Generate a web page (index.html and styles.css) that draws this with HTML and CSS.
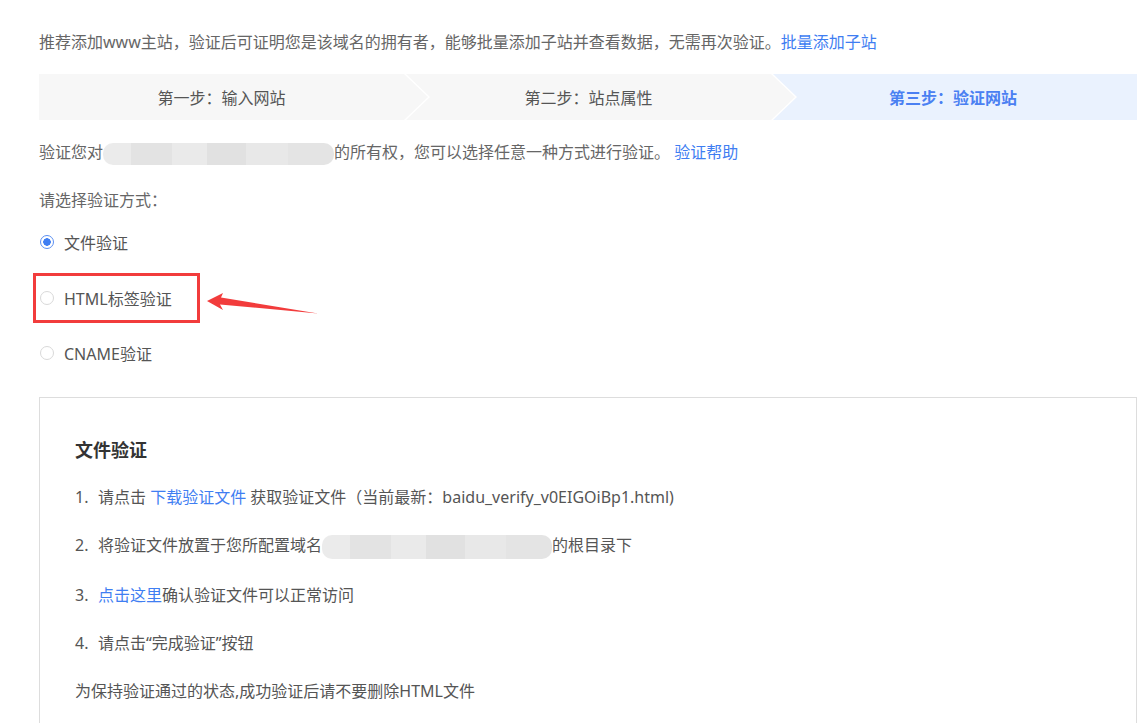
FILE: index.html
```html
<!DOCTYPE html>
<html lang="zh-CN">
<head>
    <meta charset="UTF-8">
    <title>验证网站</title>
    <link rel="stylesheet" href="styles.css">
</head>
<body>
    <div class="page">
        <p class="intro">推荐添加www主站，验证后可证明您是该域名的拥有者，能够批量添加子站并查看数据，无需再次验证。<a class="link" href="#">批量添加子站</a></p>

        <div class="steps">
            <div class="step step-first">第一步：输入网站</div>
            <div class="step step-mid">第二步：站点属性</div>
            <div class="step step-last">第三步：验证网站</div>
        </div>

        <p class="line">验证您对<span class="blur"></span>的所有权，您可以选择任意一种方式进行验证。 <a class="link" href="#">验证帮助</a></p>
        <p class="line label">请选择验证方式：</p>

        <div class="methods">
            <div class="method"><span class="radio checked"></span>文件验证</div>
            <div class="method marked">
                <span class="radio"></span>HTML标签验证
                <div class="mark-box"></div>
                <svg class="mark-arrow" width="120" height="30" viewBox="200 290 120 30">
                    <polygon points="207,302 223,294 221,298.5 318,314.5 220,305.5 223,311" fill="#f23c3c"/>
                </svg>
            </div>
            <div class="method"><span class="radio"></span>CNAME验证</div>
        </div>

        <div class="panel">
            <h3 class="panel-title">文件验证</h3>
            <ol class="tips">
                <li><span class="num">1.</span>请点击 <a class="link" href="#">下载验证文件</a> 获取验证文件（当前最新：baidu_verify_v0EIGOiBp1.html)</li>
                <li><span class="num">2.</span>将验证文件放置于您所配置域名<span class="blur blur-sm"></span>的根目录下</li>
                <li><span class="num">3.</span><a class="link" href="#">点击这里</a>确认验证文件可以正常访问</li>
                <li><span class="num">4.</span>请点击“完成验证”按钮</li>
                <li>为保持验证通过的状态,成功验证后请不要删除HTML文件</li>
            </ol>
        </div>
    </div>
</body>
</html>
```

FILE: styles.css
```css
body {
    margin: 0;
    background-color: #fff;
    font-family: "Noto Sans", "Noto Sans CJK SC", sans-serif;
    font-size: 16px;
    color: #555;
}
.page {
    padding: 31px 11px 0 39px;
    overflow: hidden;
}
p {
    margin: 0;
}
.link {
    color: #3f7ef2;
    text-decoration: none;
}
.intro {
    line-height: 22px;
    color: #666;
}

/* step bar */
.steps {
    display: flex;
    height: 46px;
    margin-top: 21px;
}
.step {
    display: flex;
    align-items: center;
    justify-content: center;
    background-color: #f7f7f7;
    color: #555;
}
.step-first,
.step-mid {
    flex: 0 0 389px;
    margin-right: -22px;
    padding-right: 24px;
    box-sizing: border-box;
}
.step-first {
    clip-path: polygon(0 0, calc(100% - 24px) 0, 100% 50%, calc(100% - 24px) 100%, 0 100%);
}
.step-mid {
    clip-path: polygon(0 0, calc(100% - 24px) 0, 100% 50%, calc(100% - 24px) 100%, 0 100%, 24px 50%);
}
.step-last {
    flex: 1;
    padding-right: 4px;
    background-color: #eaf2fe;
    color: #4a80f2;
    font-weight: bold;
    clip-path: polygon(0 0, 100% 0, 100% 100%, 0 100%, 24px 50%);
}

.line {
    margin-top: 21px;
    line-height: 22px;
    color: #666;
}
.label {
    margin-top: 24px;
}
.blur {
    display: inline-block;
    width: 231px;
    height: 22px;
    vertical-align: middle;
    border-radius: 10px;
    background: linear-gradient(to right, #ebebeb 0 12%, #e3e3e3 12% 30%, #eaeaea 30% 45%, #e1e1e1 45% 62%, #e8e8e8 62% 80%, #e4e4e4 80% 100%);
}
.blur-sm {
    width: 230px;
    height: 24px;
}

/* radios */
.methods {
    margin-top: 4px;
}
.method {
    position: relative;
    display: flex;
    align-items: center;
    height: 55.5px;
    padding-left: 1px;
    color: #555;
}
.radio {
    width: 14px;
    height: 14px;
    margin-right: 10px;
    border: 1px solid #d9d9d9;
    border-radius: 50%;
    box-sizing: border-box;
    background-color: #fff;
}
.radio.checked {
    border-color: #5b8ff2;
    background: radial-gradient(circle, #3f7ef2 0 3.5px, #fff 4px);
}
.mark-box {
    position: absolute;
    left: -6px;
    top: 3px;
    width: 167px;
    height: 50px;
    border: 3px solid #f23c3c;
    box-sizing: border-box;
}
.mark-arrow {
    position: absolute;
    left: 161px;
    top: 19px;
}

/* file panel */
.panel {
    margin-top: 16px;
    border: 1px solid #ddd;
    padding: 40px 35px 40px;
}
.panel-title {
    margin: 0;
    font-size: 18px;
    line-height: 24px;
    color: #333;
}
.tips {
    list-style: none;
    margin: 23px 0 0;
    padding: 0;
}
.tips li {
    line-height: 24px;
    margin-top: 24px;
}
.tips li:first-child {
    margin-top: 0;
}
.num {
    display: inline-block;
    width: 23px;
}
```
